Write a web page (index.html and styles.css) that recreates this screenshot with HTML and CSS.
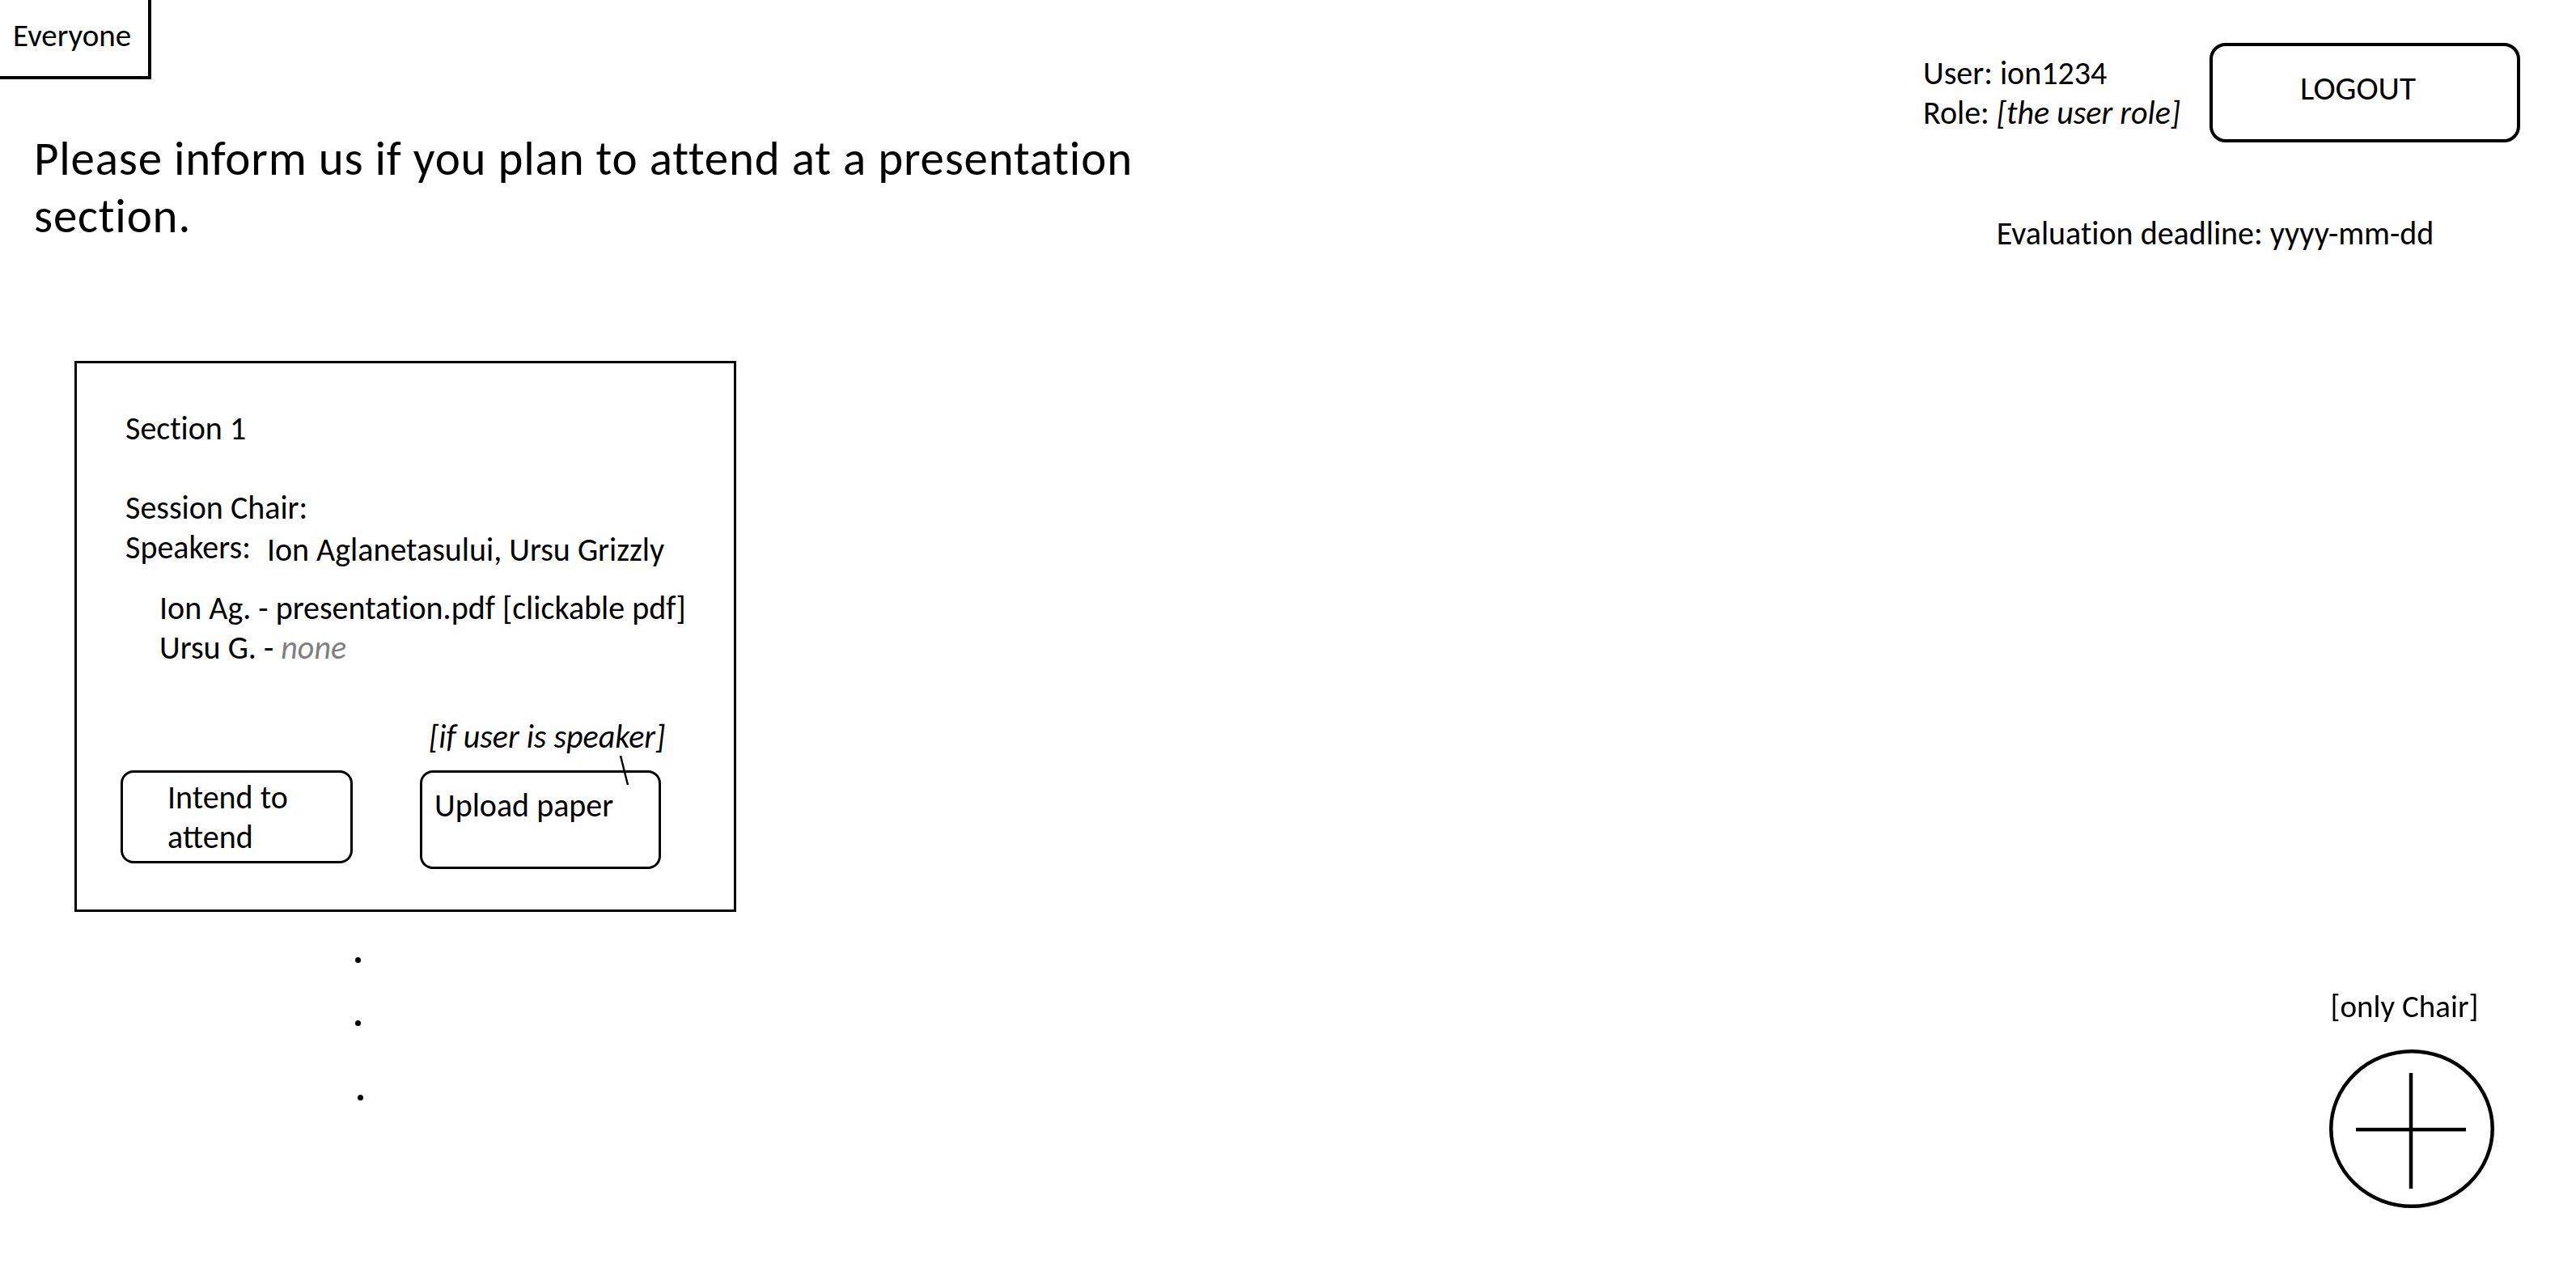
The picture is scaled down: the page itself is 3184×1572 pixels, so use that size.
FILE: index.html
```html
<!DOCTYPE html>
<html lang="en">
<head>
<meta charset="utf-8">
<title>Presentation sections</title>
<link rel="stylesheet" href="styles.css">
</head>
<body>
<div class="page">
  <header class="top">
    <div class="top-left">
      <div class="scope-tag">Everyone</div>
      <h1 class="intro">Please inform us if you plan to attend at a presentation<br>section.</h1>
    </div>
    <div class="top-right">
      <div class="account">
        <div class="user-info">
          <div>User: ion1234</div>
          <div>Role: <em>[the user role]</em></div>
        </div>
        <button class="logout" type="button">LOGOUT</button>
      </div>
      <div class="deadline">Evaluation deadline: yyyy-mm-dd</div>
    </div>
  </header>

  <main class="sections">
    <article class="section-card">
      <div class="section-title">Section 1</div>
      <div class="meta-line">Session Chair:</div>
      <div class="meta-line">Speakers:<span class="speaker-names">Ion Aglanetasului, Ursu Grizzly</span></div>
      <ul class="files">
        <li>Ion Ag. - presentation.pdf [clickable pdf]</li>
        <li>Ursu G. - <em class="muted">none</em></li>
      </ul>
      <div class="actions">
        <div class="hint">[if user is speaker]
          <svg class="callout-line" width="16" height="40" viewBox="0 0 16 40"><line x1="3" y1="2" x2="12" y2="38" stroke="#000" stroke-width="2.5"/></svg>
        </div>
        <button class="action-btn intend" type="button">Intend to<br>attend</button>
        <button class="action-btn upload" type="button">Upload paper</button>
      </div>
    </article>
    <div class="more-dots">
      <span class="dot"></span>
      <span class="dot"></span>
      <span class="dot"></span>
    </div>
  </main>

  <div class="fab-area">
    <div class="fab-label">[only Chair]</div>
    <button class="fab" type="button" aria-label="Add section">
      <svg width="208" height="200" viewBox="0 0 208 200">
        <ellipse cx="104" cy="100" rx="99.75" ry="95.75" fill="none" stroke="#000" stroke-width="4.5"/>
        <line x1="103" y1="31" x2="103" y2="174" stroke="#000" stroke-width="4.5"/>
        <line x1="35" y1="101" x2="171" y2="101" stroke="#000" stroke-width="4.5"/>
      </svg>
    </button>
  </div>
</div>
</body>
</html>
```
FILE: styles.css
```css
html, body {
  margin: 0;
  padding: 0;
  background: #fff;
}

body {
  font-family: Carlito, Calibri, Lato, "Open Sans", sans-serif;
  font-size: 40px;
  line-height: 49px;
  color: #000;
  font-variant-ligatures: no-common-ligatures;
}

.page {
  min-height: 1572px;
}

/* ---------- header ---------- */
.top {
  display: flex;
  justify-content: space-between;
  align-items: flex-start;
}

.scope-tag {
  box-sizing: border-box;
  width: 187px;
  height: 98px;
  padding: 20px 0 0 16px;
  font-size: 39px;
  line-height: 48px;
  border-right: 4px solid #000;
  border-bottom: 4px solid #000;
}

.intro {
  margin: 63px 0 0 0;
  padding-left: 42px;
  font-size: 59px;
  line-height: 71px;
  letter-spacing: 0.8px;
  font-weight: normal;
}

.top-right {
  display: flex;
  flex-direction: column;
  align-items: center;
  padding: 53px 69px 0 0;
}

.account {
  display: flex;
  align-items: flex-start;
  gap: 36px;
}

.user-info {
  margin-top: 13px;
}

.logout {
  box-sizing: border-box;
  width: 384px;
  padding: 27px 17px 38px 0;
  border: 4.5px solid #000;
  border-radius: 20px;
  background: #fff;
  font-family: inherit;
  font-size: 41px;
  line-height: 50px;
  color: #000;
  text-align: center;
  display: block;
}

.deadline {
  margin: 88px 16px 0 0;
}

/* ---------- section card ---------- */
.sections {
  padding: 133px 0 0 92px;
}

.section-card {
  box-sizing: border-box;
  width: 818px;
  height: 681px;
  padding: 56px 0 0 60px;
  border: 3px solid #000;
}

.section-title {
  margin-bottom: 49px;
}

.speaker-names {
  margin-left: 20px;
  position: relative;
  top: 3px;
}

.files {
  list-style: none;
  margin: 26px 0 0 42px;
  padding: 0;
}

.muted {
  color: #7f7f7f;
}

.actions {
  display: grid;
  grid-template-columns: 287px 298px;
  column-gap: 83px;
  align-items: start;
  margin: 61px 0 0 -6px;
}

.hint {
  grid-column: 2;
  grid-row: 1;
  position: relative;
  margin: 0 0 17px 11px;
  font-style: italic;
  white-space: nowrap;
}

.callout-line {
  position: absolute;
  left: 234px;
  top: 46px;
}

.action-btn {
  box-sizing: border-box;
  grid-row: 2;
  border: 3px solid #000;
  border-radius: 16px;
  background: #fff;
  font-family: inherit;
  font-size: 40px;
  line-height: 49px;
  color: #000;
  text-align: left;
  display: block;
}

.intend {
  grid-column: 1;
  padding: 6px 0 5px 55px;
}

.upload {
  grid-column: 2;
  padding: 16px 0 51px 15px;
}

.more-dots {
  display: flex;
  flex-direction: column;
  align-items: flex-start;
  margin: 56px 0 0 347px;
}

.dot {
  width: 7px;
  height: 7px;
  border-radius: 50%;
  background: #000;
}

.dot + .dot {
  margin-top: 71px;
}

.dot:last-child {
  margin-top: 85px;
  margin-left: 3px;
}

/* ---------- floating add button ---------- */
.fab-area {
  position: fixed;
  right: 99px;
  bottom: 77px;
  display: flex;
  flex-direction: column;
  align-items: center;
  gap: 27px;
}

.fab-label {
  font-size: 39px;
  margin-right: 18px;
}

.fab {
  padding: 0;
  margin: 0;
  border: none;
  background: transparent;
  line-height: 0;
  display: block;
}
```
